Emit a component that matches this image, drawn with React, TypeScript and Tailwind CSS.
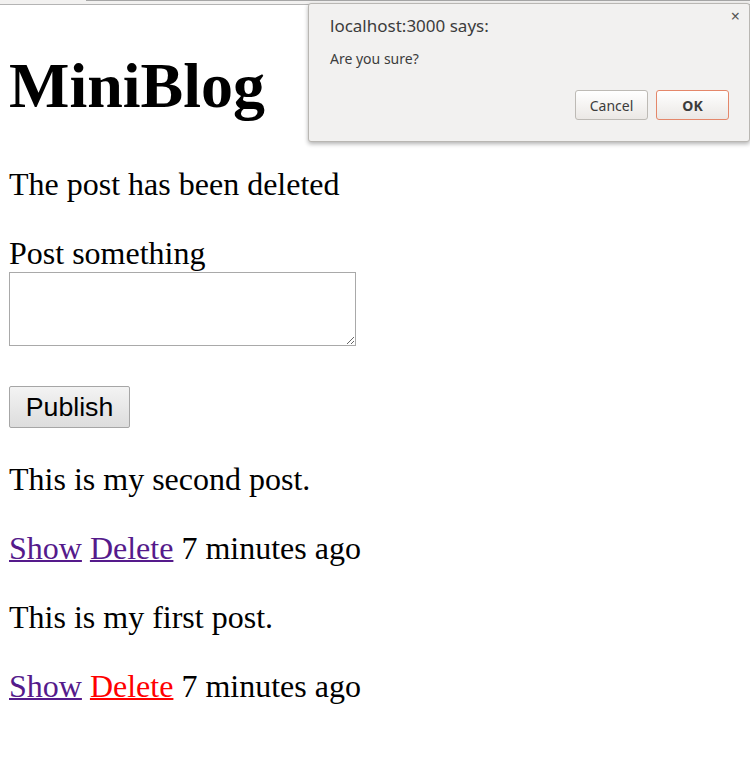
import React from "react";

const serif = "font-['Liberation_Serif',_'Times_New_Roman',_serif]";

function ConfirmDialog() {
  return (
    <div className="absolute left-[308px] top-[3px] w-[442px] h-[139px] rounded-[3px] border border-[#b9b7b3] bg-[#f2f1f0] shadow-[0_2px_4px_rgba(0,0,0,0.3)] font-['Noto_Sans',_sans-serif] text-[#3c3c3c]">
      <button className="absolute right-[9px] top-[4px] text-[16px] leading-none text-[#555]">
        ×
      </button>
      <div className="pl-[21px] pt-[11px] text-[17px] leading-[22px]">
        localhost:3000 says:
      </div>
      <div className="pl-[21px] pt-[12px] text-[14px] leading-[20px]">
        Are you sure?
      </div>
      <div className="flex justify-end gap-[8px] pr-[20px] pt-[21px]">
        <button className="w-[73px] h-[30px] rounded-[3px] border border-[#bdbab5] bg-gradient-to-b from-[#ffffff] to-[#ebe8e5] text-[14px] text-[#3c3c3c]">
          Cancel
        </button>
        <button className="w-[73px] h-[30px] rounded-[3px] border border-[#e4876a] bg-gradient-to-b from-[#ffffff] to-[#ebe8e5] text-[14px] font-bold text-[#3c3c3c]">
          OK
        </button>
      </div>
    </div>
  );
}

export default function App() {
  const posts = [
    { body: "This is my second post.", deleteHover: false },
    { body: "This is my first post.", deleteHover: true },
  ];

  return (
    <div className={`relative min-h-[784px] bg-white text-black ${serif}`}>
      <div className="h-[5px] bg-[#f2f1f0] border-b border-[#b4b4b4] relative">
        <div className="absolute left-[86px] right-0 top-0 h-[1px] bg-[#a6a6a6]" />
      </div>
      <div className="px-[9px]">
        <h1 className="mt-[44px] text-[64px] font-bold leading-[normal]">
          MiniBlog
        </h1>
        <p className="mt-[43px] text-[32px] leading-[normal]">
          The post has been deleted
        </p>
        <form className="mt-[32px]">
          <label className="block text-[32px] leading-[normal]">
            Post something
          </label>
          <textarea className="block w-[347px] h-[74px] border border-[#a9a9a9] bg-white" />
          <button
            type="button"
            className="block mt-[40px] w-[121px] h-[42px] rounded-[2px] border border-[#a6a6a6] bg-gradient-to-b from-[#f3f3f3] to-[#dddddd] font-['Liberation_Sans',_Arial,_sans-serif] text-[26.7px] leading-none text-black"
          >
            Publish
          </button>
        </form>
        <div className="mt-[33px]">
          {posts.map((post, i) => (
            <div key={i}>
              <p className="text-[32px] leading-[normal] mb-[32px]">
                {post.body}
              </p>
              <p className="text-[32px] leading-[normal] mb-[32px]">
                <a href="#" className="text-[#551a8b] underline decoration-2">
                  Show
                </a>{" "}
                <a
                  href="#"
                  className={`underline decoration-2 ${
                    post.deleteHover ? "text-[#ff0000]" : "text-[#551a8b]"
                  }`}
                >
                  Delete
                </a>{" "}
                7 minutes ago
              </p>
            </div>
          ))}
        </div>
      </div>
      <ConfirmDialog />
    </div>
  );
}
